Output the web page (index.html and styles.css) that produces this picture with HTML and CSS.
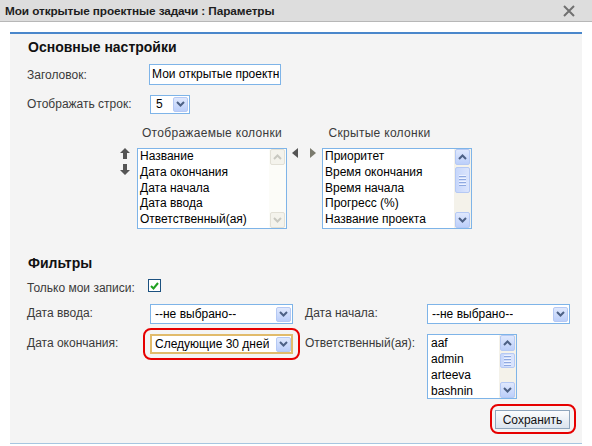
FILE: index.html
```html
<!DOCTYPE html>
<html lang="ru">
<head>
<meta charset="utf-8">
<title>Параметры</title>
<link rel="stylesheet" href="styles.css">
</head>
<body>
<div class="titlebar">
  <span class="title">Мои открытые проектные задачи : Параметры</span>
  <svg class="close" width="12" height="12" viewBox="0 0 12 12"><path d="M1 1L11 11M11 1L1 11" stroke="#707070" stroke-width="2" fill="none"/></svg>
</div>
<div class="panel">
  <h2 class="sect">Основные настройки</h2>
  <div class="row r1">
    <span class="lbl">Заголовок:</span>
    <div class="textbox">Мои открытые проектн</div>
  </div>
  <div class="row r2">
    <span class="lbl">Отображать строк:</span>
    <div class="select sel-small"><span class="val">5</span><span class="dd"><svg width="9" height="6" viewBox="0 0 9 6"><path d="M1 1L4.5 4.5L8 1" stroke="#4d6185" stroke-width="2" fill="none"/></svg></span></div>
  </div>

  <div class="cols">
    <span class="colhead h1">Отображаемые колонки</span>
    <span class="colhead h2">Скрытые колонки</span>
    <div class="updown">
      <svg width="10" height="11" viewBox="0 0 10 11"><path d="M5 0L10 5H7V11H3V5H0Z" fill="#555"/></svg>
      <svg width="10" height="11" viewBox="0 0 10 11"><path d="M5 11L10 6H7V0H3V6H0Z" fill="#555"/></svg>
    </div>
    <div class="listbox lb-cols">
      <div class="items">
        <div>Название</div>
        <div>Дата окончания</div>
        <div>Дата начала</div>
        <div>Дата ввода</div>
        <div>Ответственный(ая)</div>
      </div>
      <div class="sb sb-off">
        <span class="sbtn"><svg width="9" height="6" viewBox="0 0 9 6"><path d="M1 5L4.5 1.5L8 5" stroke="#c8c8c0" stroke-width="2" fill="none"/></svg></span>
        <span class="track"></span>
        <span class="sbtn"><svg width="9" height="6" viewBox="0 0 9 6"><path d="M1 1L4.5 4.5L8 1" stroke="#c8c8c0" stroke-width="2" fill="none"/></svg></span>
      </div>
    </div>
    <div class="leftright">
      <svg width="6" height="10" viewBox="0 0 6 10"><path d="M6 0V10L0 5Z" fill="#555"/></svg>
      <svg width="6" height="10" viewBox="0 0 6 10"><path d="M0 0V10L6 5Z" fill="#7b7b6e"/></svg>
    </div>
    <div class="listbox lb-cols">
      <div class="items">
        <div>Приоритет</div>
        <div>Время окончания</div>
        <div>Время начала</div>
        <div>Прогресс (%)</div>
        <div>Название проекта</div>
      </div>
      <div class="sb">
        <span class="sbtn"><svg width="9" height="6" viewBox="0 0 9 6"><path d="M1 5L4.5 1.5L8 5" stroke="#4d6185" stroke-width="2" fill="none"/></svg></span>
        <span class="thumb t1"><i></i><i></i><i></i><i></i></span>
        <span class="track"></span>
        <span class="sbtn"><svg width="9" height="6" viewBox="0 0 9 6"><path d="M1 1L4.5 4.5L8 1" stroke="#4d6185" stroke-width="2" fill="none"/></svg></span>
      </div>
    </div>
  </div>

  <h2 class="sect sect2">Фильтры</h2>
  <div class="row r3">
    <span class="lbl lbl-cb">Только мои записи:</span>
    <span class="checkbox"><svg width="9" height="8" viewBox="0 0 9 8"><path d="M1 4L3.5 6.5L8 1" stroke="#21a121" stroke-width="2" fill="none"/></svg></span>
  </div>

  <div class="filters">
    <span class="flbl">Дата ввода:</span>
    <div class="select"><span class="val">--не выбрано--</span><span class="dd"><svg width="9" height="6" viewBox="0 0 9 6"><path d="M1 1L4.5 4.5L8 1" stroke="#4d6185" stroke-width="2" fill="none"/></svg></span></div>
    <span></span>
    <span class="flbl">Дата начала:</span>
    <div class="select"><span class="val">--не выбрано--</span><span class="dd"><svg width="9" height="6" viewBox="0 0 9 6"><path d="M1 1L4.5 4.5L8 1" stroke="#4d6185" stroke-width="2" fill="none"/></svg></span></div>

    <span class="flbl">Дата окончания:</span>
    <div class="hl-wrap">
      <div class="select sel-focus"><span class="val">Следующие 30 дней</span><span class="dd"><svg width="9" height="6" viewBox="0 0 9 6"><path d="M1 1L4.5 4.5L8 1" stroke="#4d6185" stroke-width="2" fill="none"/></svg></span></div>
      <span class="hl hl-sel"></span>
    </div>
    <span></span>
    <span class="flbl">Ответственный(ая):</span>
    <div class="listbox lb-users">
      <div class="items">
        <div>aaf</div>
        <div>admin</div>
        <div>arteeva</div>
        <div>bashnin</div>
      </div>
      <div class="sb">
        <span class="sbtn"><svg width="9" height="6" viewBox="0 0 9 6"><path d="M1 5L4.5 1.5L8 5" stroke="#4d6185" stroke-width="2" fill="none"/></svg></span>
        <span class="thumb t2"><i></i><i></i><i></i><i></i></span>
        <span class="track"></span>
        <span class="sbtn"><svg width="9" height="6" viewBox="0 0 9 6"><path d="M1 1L4.5 4.5L8 1" stroke="#4d6185" stroke-width="2" fill="none"/></svg></span>
      </div>
    </div>
  </div>

  <div class="actions">
    <div class="hl-wrap">
      <button class="btn" type="button">Сохранить</button>
      <span class="hl hl-btn"></span>
    </div>
  </div>
</div>
</body>
</html>
```

FILE: styles.css
```css
html, body {
  margin: 0;
  padding: 0;
}
body {
  width: 592px;
  height: 446px;
  overflow: hidden;
  background: #ffffff;
  font-family: "Liberation Sans", Arial, sans-serif;
  font-size: 12px;
  color: #3a3a3a;
}

.titlebar {
  height: 21px;
  background: #dddddd;
  border-bottom: 1px solid #b7b7b7;
  display: flex;
  align-items: center;
  justify-content: space-between;
  padding: 0 17px 0 5px;
}
.title {
  font-weight: bold;
  font-size: 11.8px;
  letter-spacing: -0.1px;
  color: #1e1e1e;
}

.panel {
  box-sizing: border-box;
  margin: 10px 10px 0;
  height: 412px;
  border-top: 2px solid #4a87cb;
  border-bottom: 1px solid #a7c6e0;
  background: #f4f4f4;
  padding: 5px 12px 0 17px;
}

.sect {
  margin: 0 0 0 1px;
  font-size: 14px;
  font-weight: bold;
  color: #111;
  line-height: 16px;
  height: 16px;
}
.sect2 {
  margin-top: 26px;
}

.row {
  display: flex;
  align-items: center;
}
.r1 { margin-top: 9px; height: 21px; }
.r2 { margin-top: 10px; height: 18px; }
.r3 { margin-top: 8px; height: 13px; }
.lbl { width: 122px; }
.lbl-cb { width: 121px; position: relative; top: 2px; }

.textbox {
  box-sizing: border-box;
  width: 132px;
  height: 21px;
  border: 1px solid #7eb4e8;
  background: #fff;
  color: #000;
  padding: 0 0 0 2px;
  line-height: 19px;
  white-space: nowrap;
  overflow: hidden;
}

.select {
  box-sizing: border-box;
  width: 143px;
  height: 20px;
  border: 1px solid #7eb4e8;
  background: #fff;
  color: #000;
  display: flex;
  align-items: center;
  justify-content: space-between;
  padding: 0 1px 0 4px;
}
.sel-small {
  width: 40px;
  height: 19px;
  margin-left: 1px;
  padding-left: 5px;
}
.sel-focus {
  border: 2px solid #e1bb6b;
  padding-left: 3px;
  padding-right: 0;
}
.val {
  white-space: nowrap;
  overflow: hidden;
}
.dd, .sbtn {
  box-sizing: border-box;
  width: 15px;
  height: 15px;
  border: 1px solid #b5c9f4;
  border-radius: 2px;
  background: linear-gradient(#dfe8fd, #bccffa);
  display: flex;
  align-items: center;
  justify-content: center;
  flex: none;
}

.cols {
  margin-top: 12px;
  margin-left: 91px;
  display: grid;
  grid-template-columns: 19px 150px 35px 150px;
  grid-template-rows: 16px 81px;
  row-gap: 7px;
}
.colhead {
  line-height: 16px;
  white-space: nowrap;
  letter-spacing: 0.3px;
}
.h1 { grid-column: 2; text-align: center; }
.h2 { grid-column: 3 / 5; text-align: center; }
.updown {
  grid-column: 1;
  display: flex;
  flex-direction: column;
  gap: 5px;
  padding-left: 2px;
}
.leftright {
  display: flex;
  gap: 12px;
  padding: 0 0 0 5px;
}

.listbox {
  box-sizing: border-box;
  border: 1px solid #7eb4e8;
  background: #fff;
  display: flex;
  color: #000;
}
.lb-cols { height: 81px; }
.items {
  flex: 1;
  overflow: hidden;
  padding-left: 2px;
}
.items div {
  line-height: 16px;
  white-space: nowrap;
}
.lb-cols .items div { line-height: 15.8px; }

.sb {
  width: 17px;
  display: flex;
  flex-direction: column;
  background: #f4f2ea;
  padding: 0 1px;
  box-sizing: border-box;
}
.sb .sbtn {
  width: 15px;
  height: 16px;
}
.track { flex: 1; }
.sb-off { background: #fcfcf8; }
.sb-off .sbtn {
  background: #f4f3ec;
  border-color: #e2e0d6;
}
.thumb {
  box-sizing: border-box;
  width: 15px;
  border: 1px solid #b5c9f4;
  border-radius: 2px;
  background: linear-gradient(90deg, #c7d7fb, #dbe5fd);
  display: flex;
  flex-direction: column;
  align-items: center;
  justify-content: center;
  gap: 1px;
  margin-top: 2px;
}
.thumb i {
  display: block;
  width: 7px;
  height: 1px;
  background: #eef3ff;
  border-bottom: 1px solid #8fa9e0;
}
.t1 { height: 26px; }
.t2 { height: 15px; }

.checkbox {
  box-sizing: border-box;
  width: 13px;
  height: 13px;
  border: 1px solid #1c5180;
  background: #fff;
  display: flex;
  align-items: center;
  justify-content: center;
}

.filters {
  margin-top: 12px;
  display: grid;
  grid-template-columns: 123px 143px 12px 122px 143px;
  grid-template-rows: 20px auto;
  row-gap: 10px;
  align-items: start;
}
.flbl {
  line-height: 18px;
  white-space: nowrap;
}
.lb-users {
  width: 90px;
  height: 65px;
}
.lb-users .items { padding-left: 3px; }

.hl-wrap {
  position: relative;
}
.hl {
  position: absolute;
  border: 2px solid #e60000;
  border-radius: 8px;
  pointer-events: none;
}
.hl-sel {
  left: -7px;
  right: -7px;
  top: -6px;
  bottom: -6px;
}
.hl-btn {
  left: -5px;
  right: -6px;
  top: -6px;
  bottom: -5px;
}

.actions {
  margin-top: 11px;
  display: flex;
  justify-content: flex-end;
}
.btn {
  box-sizing: border-box;
  display: block;
  width: 75px;
  height: 19px;
  border: 1px solid #8fa6bd;
  background: linear-gradient(#fbfcfd, #dbe4ee);
  font-family: "Liberation Sans", Arial, sans-serif;
  font-size: 12px;
  color: #111;
  padding: 0;
}
```
